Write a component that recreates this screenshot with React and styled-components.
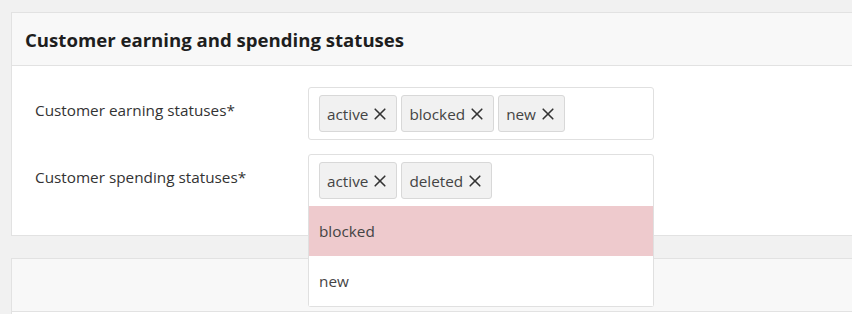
import styled, { createGlobalStyle } from 'styled-components';

const GlobalStyle = createGlobalStyle`
  html, body {
    margin: 0;
    padding: 0;
    background: #f1f1f1;
    overflow: hidden;
  }
  body {
    font-family: 'Open Sans', 'Noto Sans', sans-serif;
  }
`;

function XIcon() {
  return (
    <svg width='12' height='12' viewBox='0 0 12 12' fill='none'>
      <path d='M1.2 1.2L10.8 10.8M10.8 1.2L1.2 10.8' stroke='#333' strokeWidth='1.6' strokeLinecap='round' />
    </svg>
  );
}

function TagSelect({ tags, open, options }) {
  return (
    <SelectWrap>
      <SelectBox open={open}>
        {tags.map((t) => (
          <Tag key={t}>
            {t}
            <XIcon />
          </Tag>
        ))}
      </SelectBox>
      {open && (
        <Dropdown>
          {options.map((o, i) => (
            <Option key={o} active={i === 0}>
              {o}
            </Option>
          ))}
        </Dropdown>
      )}
    </SelectWrap>
  );
}

function App() {
  return (
    <Page>
      <GlobalStyle />
      <Panel>
        <PanelHeader>Customer earning and spending statuses</PanelHeader>
        <PanelBody>
          <FormRow>
            <Label>Customer earning statuses*</Label>
            <TagSelect tags={['active', 'blocked', 'new']} />
          </FormRow>
          <FormRow>
            <Label>Customer spending statuses*</Label>
            <TagSelect tags={['active', 'deleted']} open options={['blocked', 'new']} />
          </FormRow>
        </PanelBody>
      </Panel>
      <Panel>
        <PanelHeader />
        <PanelBody />
      </Panel>
    </Page>
  );
}

export default App;

const Page = styled.div`
  padding: 12px 0 0 11px;
  display: flex;
  flex-direction: column;
  gap: 22px;
`;

const Panel = styled.div`
  width: 900px;
  border: 1px solid #e2e2e2;
  background: #fff;
`;

const PanelHeader = styled.div`
  height: 53px;
  box-sizing: border-box;
  background: #f8f8f8;
  border-bottom: 1px solid #e2e2e2;
  padding: 0 13px;
  display: flex;
  align-items: center;
  font-size: 18.6px;
  font-weight: 700;
  color: #1e1e1e;
`;

const PanelBody = styled.div`
  padding: 21px 0 28px;
  display: flex;
  flex-direction: column;
  gap: 14px;
`;

const FormRow = styled.div`
  display: grid;
  grid-template-columns: 296px 346px;
  align-items: start;
`;

const Label = styled.div`
  padding: 12px 0 0 23px;
  font-size: 15.3px;
  line-height: 22px;
  color: #333;
`;

const SelectWrap = styled.div`
  position: relative;
`;

const SelectBox = styled.div`
  box-sizing: border-box;
  height: 53px;
  border: 1px solid #e0e0e0;
  border-radius: ${(p) => (p.open ? '3px 3px 0 0' : '3px')};
  background: #fff;
  padding: 7px 10px;
  display: flex;
  gap: 4px;
`;

const Tag = styled.div`
  box-sizing: border-box;
  height: 37px;
  padding: 0 10px 0 7px;
  display: flex;
  align-items: center;
  gap: 6px;
  background: #f1f1f1;
  border: 1px solid #d8d8d8;
  border-radius: 3px;
  font-size: 15.3px;
  color: #444;
`;

const Dropdown = styled.div`
  position: absolute;
  top: 52px;
  left: 0;
  right: 0;
  background: #fff;
  border: 1px solid #e0e0e0;
  border-top: none;
  border-radius: 0 0 3px 3px;
  z-index: 2;
`;

const Option = styled.div`
  height: 50px;
  display: flex;
  align-items: center;
  padding: 0 10px;
  font-size: 15.3px;
  color: #444;
  background: ${(p) => (p.active ? '#eecacd' : '#fff')};
`;
